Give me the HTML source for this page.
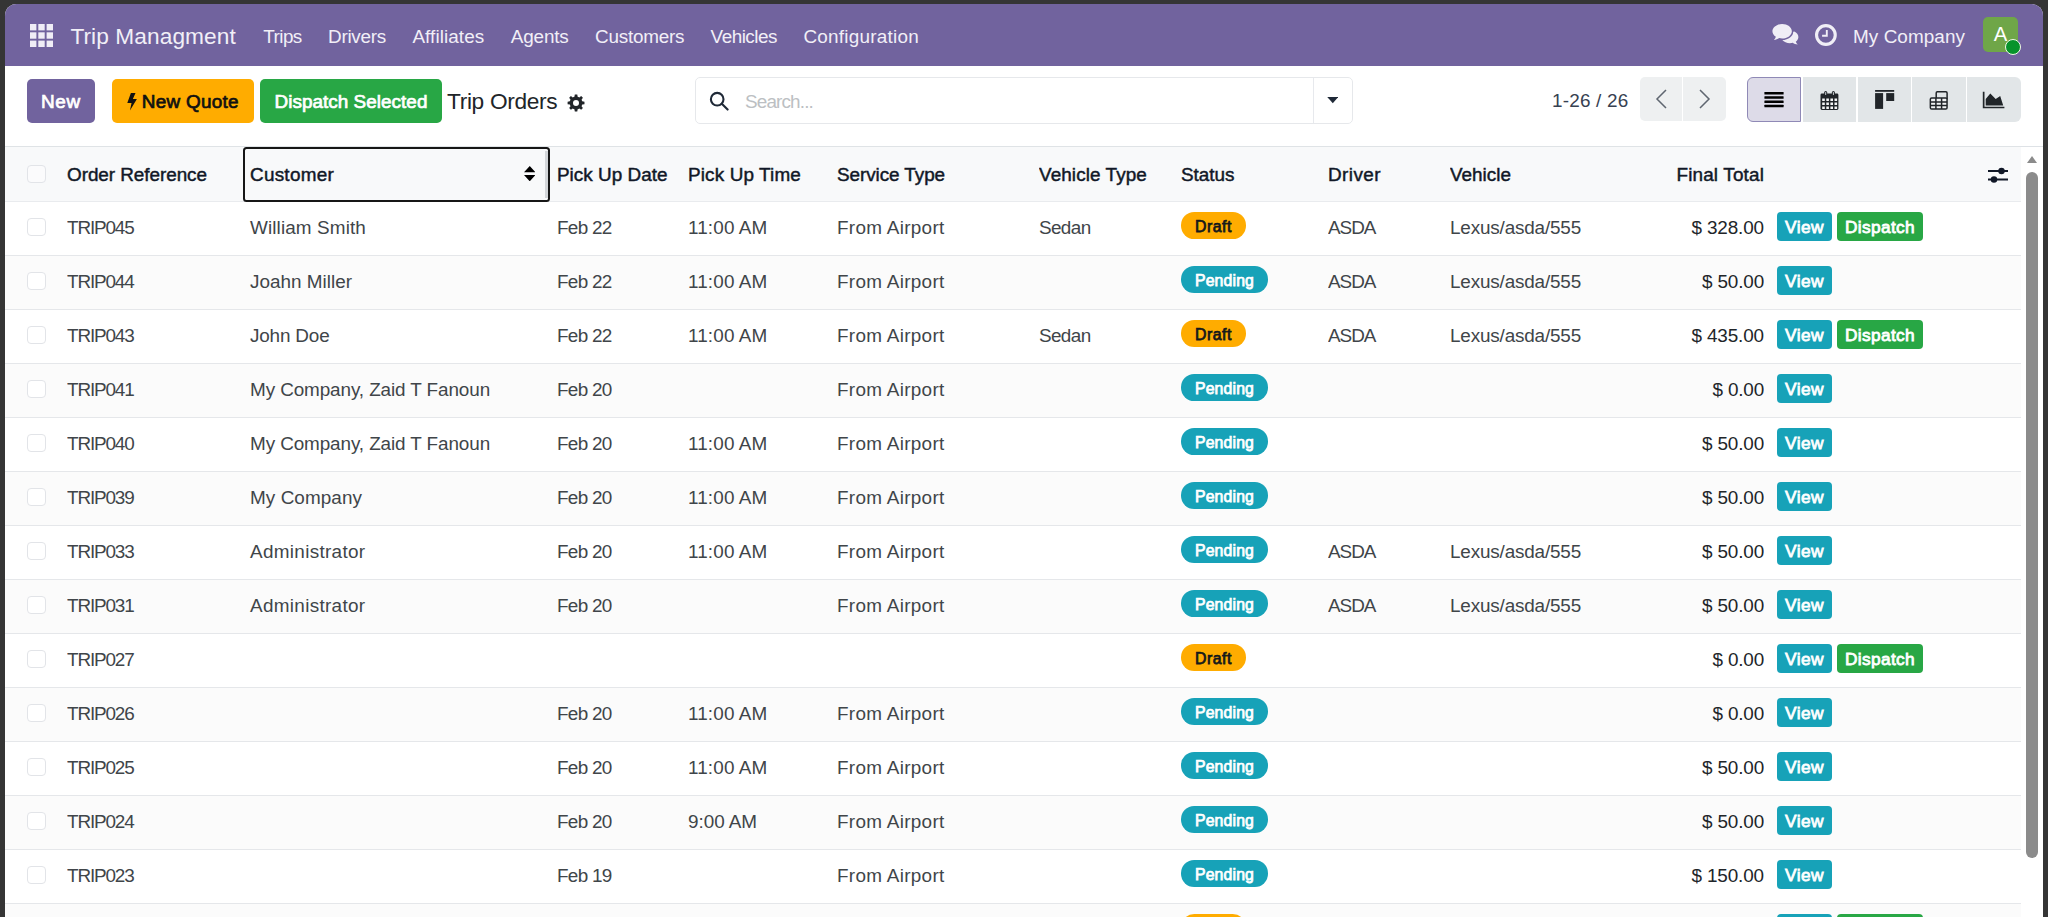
<!DOCTYPE html>
<html lang="en">
<head>
<meta charset="utf-8">
<title>Trip Orders</title>
<style>
*{box-sizing:border-box}
html,body{margin:0;padding:0}
body{width:2048px;height:917px;overflow:hidden;background:#353535;font-family:"Liberation Sans",sans-serif;font-size:18.9px;color:#404549;position:relative}
.app{position:absolute;left:5px;top:3.5px;width:2038px;height:920px;background:#fff;border-radius:11.5px 11.5px 0 0;overflow:hidden}
/* navbar */
.nav{position:absolute;left:0;top:0;width:100%;height:62px;background:#71639e;color:#f1eff7}
.nav span.t{position:absolute;white-space:nowrap;line-height:1}
.brand{font-size:22.7px}
.nav svg{position:absolute}
.avatar{position:absolute;left:1978px;top:13.5px;width:35px;height:35px;border-radius:5px;background:#6fa648;color:#fff;font-size:20.3px;text-align:center;line-height:35px}
.avatar i{position:absolute;right:-3px;bottom:-3px;width:16px;height:16px;border-radius:50%;background:#07932b;border:1.5px solid #f4fbe9}
/* control panel */
.cp{position:absolute;left:0;top:62px;width:100%;height:81px}
.btn{position:absolute;top:13.5px;height:43.5px;border-radius:5px;color:#fff;font-weight:normal;-webkit-text-stroke:.7px currentColor;font-size:18.9px;line-height:45.6px;text-align:center;white-space:nowrap}
.b-new{left:22px;width:68px;background:#71639e}
.b-quote{left:107px;width:142px;background:#ffac00;color:#111}
.b-disp{left:255px;width:182px;background:#28a745}
.title{position:absolute;left:442px;top:24px;font-size:22.7px;line-height:1;color:#212529;white-space:nowrap}
.search{position:absolute;left:690px;top:11.5px;width:658px;height:47px;border:1px solid #e6e8eb;border-radius:5px}
.search .ph{position:absolute;left:49px;top:14.5px;color:#bcbfc3;line-height:1;font-size:18.9px}
.search .div{position:absolute;left:617px;top:0;width:1px;height:45px;background:#e7e9ed}
.pager{position:absolute;left:1547px;top:26px;line-height:1;color:#374151;white-space:nowrap}
.pbtn{position:absolute;top:11.5px;height:44px;background:#eef0f1}
.vs{position:absolute;top:11.5px;height:45px;background:#e2e6e8}
/* list */
.list{position:absolute;left:0;top:142px;width:2016px}
.hline{position:absolute;left:0;top:142px;width:100%;height:1px;background:#dee2e6}
table{border-collapse:collapse;table-layout:fixed;width:2016px}
th,td{padding:0;height:54px;text-align:left;white-space:nowrap;overflow:hidden;vertical-align:middle;font-weight:normal}
tbody td{padding-bottom:0}
thead tr{background:#f8f9fa;border-top:1px solid #dfe3e6;border-bottom:1px solid #e9ebee}
thead th{color:#111827;-webkit-text-stroke:.45px #111827;height:55px;padding-top:2.4px}
thead th.custh{padding:0;overflow:visible;position:relative}
.focus{position:absolute;left:0;top:.5px;height:54.5px;width:307px;border:2px solid #161616;border-radius:3.5px;line-height:52.6px;background:#f8f9fa}
.focus .sort{position:absolute;left:278.7px;top:16.8px}
.focus i{position:absolute;right:0;top:1.5px;bottom:1.5px;width:3.5px;background:#d3d6d9}
tbody tr{border-bottom:1px solid #e5e7ea}
tbody tr:nth-child(even){background:#fbfbfb}
.cb{display:block;width:18.5px;height:18.5px;border:1px solid #e2e4e8;border-radius:4px;margin-left:22.3px;background:#fff;position:relative;top:-1.1px}
td.num{text-align:right;color:#212529}
.badge{display:inline-block;height:26.4px;line-height:29.2px;border-radius:13.2px;padding:0 14px;font-size:15.8px;font-weight:normal;-webkit-text-stroke:.75px currentColor;position:relative;top:-2.5px}
.draft{background:#ffac00;color:#15181b}
.pend{background:#17a2b8;color:#fff}
.rb{display:inline-block;height:28.5px;line-height:31.3px;border-radius:4px;color:#fff;font-weight:normal;-webkit-text-stroke:.8px #fff;font-size:17.3px;text-align:center;vertical-align:middle;position:relative;top:-1.5px}
.rb.v{background:#17a2b8;width:55px;margin-left:13px}
.rb.d{background:#28a745;width:86px;margin-left:5px}
.sb{position:absolute;left:2021.2px;top:168px;width:11.8px;height:686px;border-radius:6px;background:#8b8b8b}
.sba{position:absolute;left:2022px;top:152.5px;width:0;height:0;border-left:5.3px solid transparent;border-right:5.3px solid transparent;border-bottom:7.5px solid #8b8b8b}
</style>
</head>
<body>
<div class="app">
<div class="nav">
<svg style="left:25px;top:20.1px" width="23" height="23" viewBox="0 0 22.7 22.7" fill="#f0eef6"><rect x="0" y="0" width="6.3" height="6.3"/><rect x="8.2" y="0" width="6.3" height="6.3"/><rect x="16.4" y="0" width="6.3" height="6.3"/><rect x="0" y="8.2" width="6.3" height="6.3"/><rect x="8.2" y="8.2" width="6.3" height="6.3"/><rect x="16.4" y="8.2" width="6.3" height="6.3"/><rect x="0" y="16.4" width="6.3" height="6.3"/><rect x="8.2" y="16.4" width="6.3" height="6.3"/><rect x="16.4" y="16.4" width="6.3" height="6.3"/></svg>
<span class="t brand" style="letter-spacing:0.08px;left:65.4px;top:21.48px;font-size:22.7px">Trip Managment</span>
<span class="t " style="letter-spacing:-0.54px;left:258.2px;top:24.10px;font-size:18.9px">Trips</span>
<span class="t " style="letter-spacing:-0.26px;left:323px;top:24.10px;font-size:18.9px">Drivers</span>
<span class="t " style="letter-spacing:0.09px;left:407.4px;top:24.10px;font-size:18.9px">Affiliates</span>
<span class="t " style="letter-spacing:-0.14px;left:505.7px;top:24.10px;font-size:18.9px">Agents</span>
<span class="t " style="letter-spacing:-0.25px;left:590.1px;top:24.10px;font-size:18.9px">Customers</span>
<span class="t " style="letter-spacing:-0.50px;left:705.6px;top:24.10px;font-size:18.9px">Vehicles</span>
<span class="t " style="letter-spacing:0.24px;left:798.4px;top:24.10px;font-size:18.9px">Configuration</span>
<svg style="left:1766.6px;top:19.9px" width="27" height="23.1" viewBox="0 0 28 24" fill="#f0eef6">
<path d="M10.5 1C4.9 1 .4 4.4 .4 8.6c0 2.3 1.4 4.4 3.6 5.8-.4 1.2-1.1 2.3-2.1 3.2 2.1-.1 4-.8 5.5-1.9 1 .3 2 .4 3.1.4 5.600 0 10.100-3.400 10.100-7.600S16.100 1 10.500 1z"/>
<path d="M22.6 9.600c0 4.700-5 8.500-11.300 8.700 1.700 2 4.600 3.300 7.900 3.300 1 0 2-.1 2.900-.4 1.400 1 3.200 1.700 5.200 1.800-.9-.9-1.600-1.900-2-3 1.700-1.200 2.700-2.900 2.700-4.800 0-2.400-1.700-4.500-4.300-5.700z" transform="translate(-.6,-.6)"/></svg>
<svg style="left:1808.5px;top:19.0px" width="24" height="24" viewBox="0 0 24 24" fill="none" stroke="#f0eef6">
<circle cx="11.9" cy="12" r="9.35" stroke-width="3.1"/><path d="M12.8 7.1v5.600H8.100" stroke-width="1.9"/></svg>
<span class="t " style="letter-spacing:0.07px;left:1848px;top:24.10px;font-size:18.9px">My Company</span>
<div class="avatar" style="left:1978px;top:13.5px">A<i></i></div>
</div>
<div class="cp">
<div class="btn b-new"><span style="letter-spacing:0.73px">New</span></div>
<div class="btn b-quote"><svg width="10.2" height="17.6" viewBox="0 0 11 19" style="vertical-align:-2.8px;margin-right:5px;margin-left:-.5px" fill="#111"><path d="M4.2 0h5L6.300 6.400h4.400L3.200 19l1.700-8.300H.3z"/></svg><span style="letter-spacing:0.28px">New Quote</span></div>
<div class="btn b-disp"><span style="letter-spacing:0.04px">Dispatch Selected</span></div>
<div class="title"><span style="letter-spacing:-0.33px">Trip Orders</span></div>
<svg class="gear" style="position:absolute;left:562px;top:28.5px" width="18" height="18" viewBox="0 0 24 24"><path fill="#212529" d="M24 13.600v-3.300l-3-.5c-.2-.800-.5-1.500-.9-2.200l1.800-2.500-2.300-2.300-2.500 1.800c-.7-.4-1.400-.7-2.200-.9L14.400.7h-3.300l-.5 3c-.8.2-1.500.5-2.200.9L5.900 2.800 3.600 5.100l1.800 2.500c-.4.700-.7 1.400-.9 2.200l-3 .5v3.300l3 .5c.2.800.5 1.500.9 2.200l-1.800 2.500 2.300 2.300 2.500-1.800c.7.4 1.400.7 2.200.9l.5 3h3.300l.5-3c.8-.2 1.500-.5 2.200-.9l2.500 1.800 2.300-2.300-1.800-2.500c.4-.7.7-1.400.9-2.200zM12.700 16a4 4 0 1 1 0-8 4 4 0 0 1 0 8z" transform="translate(-.7,0)"/></svg>
<div class="search"><svg style="position:absolute;left:13px;top:13px" width="20" height="20" viewBox="0 0 20 20" fill="none" stroke="#1f2937" stroke-width="2.1"><circle cx="8.2" cy="8.2" r="6.3"/><path d="M12.800 12.800l5.800 5.800" stroke-linecap="round"/></svg><span class="ph"><span style="letter-spacing:-0.85px">Search...</span></span><div class="div"></div>
<svg style="position:absolute;left:630.5px;top:19.3px" width="11.6" height="6.8" viewBox="0 0 13 8"><path d="M0 0h13L6.500 7.500z" fill="#1f2937"/></svg></div>
<div class="pager"><span style="letter-spacing:0.20px">1-26 / 26</span></div>
<div class="pbtn" style="left:1634.700px;width:42.500px;border-radius:5px 0 0 5px"><svg style="position:absolute;left:14px;top:11px" width="14" height="22" viewBox="0 0 14 22" fill="none" stroke="#5f6670" stroke-width="1.5"><path d="M12 2L3 11 12 20"/></svg></div>
<div class="pbtn" style="left:1678px;width:43px;border-radius:0 5px 5px 0"><svg style="position:absolute;left:15px;top:11px" width="14" height="22" viewBox="0 0 14 22" fill="none" stroke="#5f6670" stroke-width="1.5"><path d="M2 2L11 11 2 20"/></svg></div>
<div class="vs" style="left:1742.4px;width:53.799999999999955px;background:#dddbe8;border:1px solid #8f89b6;border-radius:6px 0 0 6px;"><svg width="53.799999999999955" height="45" style="position:absolute;left:-1px;top:-1px"><g transform="translate(-1747.40,-77)"><rect x="1764.8" y="91.9" width="19.2" height="2.5" rx=".5" fill="#000"/><rect x="1764.8" y="96.2" width="19.2" height="2.5" rx=".5" fill="#000"/><rect x="1764.8" y="100.4" width="19.2" height="2.5" rx=".5" fill="#000"/><rect x="1764.8" y="104.7" width="19.2" height="2.5" rx=".5" fill="#000"/></g></svg></div>
<div class="vs" style="left:1797.7px;width:53.5px;"><svg width="53.5" height="45" style="position:absolute;left:0px;top:0px"><g transform="translate(-1802.70,-77)"><rect x="1820.2" y="93.6" width="17.9" height="16.3" rx="1.4" fill="#212529"/><rect x="1821.90" y="98.50" width="2.6" height="2.5" fill="#f4f5f6"/><rect x="1826.00" y="98.50" width="2.6" height="2.5" fill="#f4f5f6"/><rect x="1830.10" y="98.50" width="2.6" height="2.5" fill="#f4f5f6"/><rect x="1834.20" y="98.50" width="2.6" height="2.5" fill="#f4f5f6"/><rect x="1821.90" y="102.50" width="2.6" height="2.5" fill="#f4f5f6"/><rect x="1826.00" y="102.50" width="2.6" height="2.5" fill="#f4f5f6"/><rect x="1830.10" y="102.50" width="2.6" height="2.5" fill="#f4f5f6"/><rect x="1834.20" y="102.50" width="2.6" height="2.5" fill="#f4f5f6"/><rect x="1821.90" y="106.50" width="2.6" height="2.5" fill="#f4f5f6"/><rect x="1826.00" y="106.50" width="2.6" height="2.5" fill="#f4f5f6"/><rect x="1830.10" y="106.50" width="2.6" height="2.5" fill="#f4f5f6"/><rect x="1834.20" y="106.50" width="2.6" height="2.5" fill="#f4f5f6"/><rect x="1823.90" y="91.1" width="3" height="5.2" rx="1.5" fill="#212529"/><rect x="1824.90" y="92.1" width="1" height="3" rx=".5" fill="#cfd4d8"/><rect x="1831.60" y="91.1" width="3" height="5.2" rx="1.5" fill="#212529"/><rect x="1832.60" y="92.1" width="1" height="3" rx=".5" fill="#cfd4d8"/></g></svg></div>
<div class="vs" style="left:1852.7px;width:53.200000000000045px;"><svg width="53.200000000000045" height="45" style="position:absolute;left:0px;top:0px"><g transform="translate(-1857.70,-77)"><g fill="#212529"><rect x="1874.8" y="90" width="19.1" height="1.8"/><rect x="1874.8" y="93.1" width="8" height="15.8"/><rect x="1885.9" y="93.1" width="8" height="7.9"/></g></g></svg></div>
<div class="vs" style="left:1907.4px;width:53.5px;"><svg width="53.5" height="45" style="position:absolute;left:0px;top:0px"><g transform="translate(-1912.40,-77)"><g fill="none" stroke="#212529" stroke-width="1.5"><rect x="1936.6" y="91.75" width="10.9" height="8" rx="1.2"/><rect x="1930.75" y="98.0" width="16.7" height="11" rx="1.3" fill="#f1f3f4"/><path d="M1930.75 101.9h16.7M1930.75 105.6h16.7M1936.3 98.0v11M1942.0 98.0v11"/></g></g></svg></div>
<div class="vs" style="left:1962.4px;width:53.59999999999991px;border-radius:0 6px 6px 0;"><svg width="53.59999999999991" height="45" style="position:absolute;left:0px;top:0px"><g transform="translate(-1967.40,-77)"><g fill="#212529"><path d="M1983.2 91.8h1.7v15h19.9v1.500h-21.600z"/><path d="M1986.1 105.4v-6.400l4.600-5.600 5.400 5.500 4.500-3 3 9.500z"/></g></g></svg></div>
</div>
<div class="hline"></div>
<div class="list">
<table><colgroup><col style="width:62px"><col style="width:176px"><col style="width:306.5px"><col style="width:138.5px"><col style="width:149px"><col style="width:202px"><col style="width:142px"><col style="width:147px"><col style="width:122px"><col style="width:190px"><col style="width:124px"><col style="width:257px"></colgroup><thead><tr><th><span class="cb" style="background:#fbfbfc;top:-.6px"></span></th><th><span style="letter-spacing:-0.05px">Order Reference</span></th><th class="custh"><div class="focus"><span style="letter-spacing:0.26px;margin-left:5px">Customer</span><svg class="sort" width="11.5" height="15.3" viewBox="0 0 12 16" fill="#000"><path d="M6 0l6 6.600H0zM6 16l6-6.600H0z"/></svg><i></i></div></th><th style="padding-left:7.500px"><span style="letter-spacing:0.02px">Pick Up Date</span></th><th><span style="letter-spacing:0.14px">Pick Up Time</span></th><th><span style="letter-spacing:-0.07px">Service Type</span></th><th><span style="letter-spacing:0.10px">Vehicle Type</span></th><th><span style="letter-spacing:-0.01px">Status</span></th><th><span style="letter-spacing:0.44px">Driver</span></th><th><span style="letter-spacing:0.01px">Vehicle</span></th><th style="text-align:right"><span style="letter-spacing:0.16px">Final Total</span></th><th><svg style="margin-left:224px;display:block" width="20" height="16" viewBox="0 0 20 16"><g stroke="#111827" stroke-width="1.900" fill="#111827"><path d="M0 4h20M0 12.500h20"/><circle cx="13.500" cy="4" r="2.300"/><circle cx="6" cy="12.500" r="2.300"/></g></svg></th></tr></thead><tbody>
<tr><td><span class="cb"></span></td><td><span style="letter-spacing:-1.14px">TRIP045</span></td><td style="padding-left:7px"><span style="letter-spacing:0.12px">William Smith</span></td><td style="padding-left:7.500px"><span style="letter-spacing:-0.70px">Feb 22</span></td><td><span style="letter-spacing:0.13px">11:00 AM</span></td><td><span style="letter-spacing:0.30px">From Airport</span></td><td><span style="letter-spacing:-0.62px">Sedan</span></td><td><span class="badge draft"><span style="letter-spacing:0.55px">Draft</span></span></td><td><span style="letter-spacing:-0.99px">ASDA</span></td><td><span style="letter-spacing:-0.17px">Lexus/asda/555</span></td><td class="num"><span style="letter-spacing:-0.13px">$ 328.00</span></td><td><span class="rb v"><span style="letter-spacing:0.46px">View</span></span><span class="rb d"><span style="letter-spacing:0.34px">Dispatch</span></span></td></tr>
<tr><td><span class="cb"></span></td><td><span style="letter-spacing:-1.14px">TRIP044</span></td><td style="padding-left:7px"><span style="letter-spacing:0.01px">Joahn Miller</span></td><td style="padding-left:7.500px"><span style="letter-spacing:-0.70px">Feb 22</span></td><td><span style="letter-spacing:0.13px">11:00 AM</span></td><td><span style="letter-spacing:0.30px">From Airport</span></td><td></td><td><span class="badge pend"><span style="letter-spacing:0.15px">Pending</span></span></td><td><span style="letter-spacing:-0.99px">ASDA</span></td><td><span style="letter-spacing:-0.17px">Lexus/asda/555</span></td><td class="num"><span style="letter-spacing:-0.15px">$ 50.00</span></td><td><span class="rb v"><span style="letter-spacing:0.46px">View</span></span></td></tr>
<tr><td><span class="cb"></span></td><td><span style="letter-spacing:-1.14px">TRIP043</span></td><td style="padding-left:7px"><span style="letter-spacing:-0.17px">John Doe</span></td><td style="padding-left:7.500px"><span style="letter-spacing:-0.70px">Feb 22</span></td><td><span style="letter-spacing:0.13px">11:00 AM</span></td><td><span style="letter-spacing:0.30px">From Airport</span></td><td><span style="letter-spacing:-0.62px">Sedan</span></td><td><span class="badge draft"><span style="letter-spacing:0.55px">Draft</span></span></td><td><span style="letter-spacing:-0.99px">ASDA</span></td><td><span style="letter-spacing:-0.17px">Lexus/asda/555</span></td><td class="num"><span style="letter-spacing:-0.13px">$ 435.00</span></td><td><span class="rb v"><span style="letter-spacing:0.46px">View</span></span><span class="rb d"><span style="letter-spacing:0.34px">Dispatch</span></span></td></tr>
<tr><td><span class="cb"></span></td><td><span style="letter-spacing:-1.14px">TRIP041</span></td><td style="padding-left:7px"><span style="letter-spacing:-0.10px">My Company, Zaid T Fanoun</span></td><td style="padding-left:7.500px"><span style="letter-spacing:-0.70px">Feb 20</span></td><td></td><td><span style="letter-spacing:0.30px">From Airport</span></td><td></td><td><span class="badge pend"><span style="letter-spacing:0.15px">Pending</span></span></td><td></td><td></td><td class="num"><span style="letter-spacing:-0.17px">$ 0.00</span></td><td><span class="rb v"><span style="letter-spacing:0.46px">View</span></span></td></tr>
<tr><td><span class="cb"></span></td><td><span style="letter-spacing:-1.14px">TRIP040</span></td><td style="padding-left:7px"><span style="letter-spacing:-0.10px">My Company, Zaid T Fanoun</span></td><td style="padding-left:7.500px"><span style="letter-spacing:-0.70px">Feb 20</span></td><td><span style="letter-spacing:0.13px">11:00 AM</span></td><td><span style="letter-spacing:0.30px">From Airport</span></td><td></td><td><span class="badge pend"><span style="letter-spacing:0.15px">Pending</span></span></td><td></td><td></td><td class="num"><span style="letter-spacing:-0.15px">$ 50.00</span></td><td><span class="rb v"><span style="letter-spacing:0.46px">View</span></span></td></tr>
<tr><td><span class="cb"></span></td><td><span style="letter-spacing:-1.14px">TRIP039</span></td><td style="padding-left:7px"><span style="letter-spacing:0.07px">My Company</span></td><td style="padding-left:7.500px"><span style="letter-spacing:-0.70px">Feb 20</span></td><td><span style="letter-spacing:0.13px">11:00 AM</span></td><td><span style="letter-spacing:0.30px">From Airport</span></td><td></td><td><span class="badge pend"><span style="letter-spacing:0.15px">Pending</span></span></td><td></td><td></td><td class="num"><span style="letter-spacing:-0.15px">$ 50.00</span></td><td><span class="rb v"><span style="letter-spacing:0.46px">View</span></span></td></tr>
<tr><td><span class="cb"></span></td><td><span style="letter-spacing:-1.14px">TRIP033</span></td><td style="padding-left:7px"><span style="letter-spacing:0.32px">Administrator</span></td><td style="padding-left:7.500px"><span style="letter-spacing:-0.70px">Feb 20</span></td><td><span style="letter-spacing:0.13px">11:00 AM</span></td><td><span style="letter-spacing:0.30px">From Airport</span></td><td></td><td><span class="badge pend"><span style="letter-spacing:0.15px">Pending</span></span></td><td><span style="letter-spacing:-0.99px">ASDA</span></td><td><span style="letter-spacing:-0.17px">Lexus/asda/555</span></td><td class="num"><span style="letter-spacing:-0.15px">$ 50.00</span></td><td><span class="rb v"><span style="letter-spacing:0.46px">View</span></span></td></tr>
<tr><td><span class="cb"></span></td><td><span style="letter-spacing:-1.14px">TRIP031</span></td><td style="padding-left:7px"><span style="letter-spacing:0.32px">Administrator</span></td><td style="padding-left:7.500px"><span style="letter-spacing:-0.70px">Feb 20</span></td><td></td><td><span style="letter-spacing:0.30px">From Airport</span></td><td></td><td><span class="badge pend"><span style="letter-spacing:0.15px">Pending</span></span></td><td><span style="letter-spacing:-0.99px">ASDA</span></td><td><span style="letter-spacing:-0.17px">Lexus/asda/555</span></td><td class="num"><span style="letter-spacing:-0.15px">$ 50.00</span></td><td><span class="rb v"><span style="letter-spacing:0.46px">View</span></span></td></tr>
<tr><td><span class="cb"></span></td><td><span style="letter-spacing:-1.14px">TRIP027</span></td><td style="padding-left:7px"></td><td style="padding-left:7.500px"></td><td></td><td></td><td></td><td><span class="badge draft"><span style="letter-spacing:0.55px">Draft</span></span></td><td></td><td></td><td class="num"><span style="letter-spacing:-0.17px">$ 0.00</span></td><td><span class="rb v"><span style="letter-spacing:0.46px">View</span></span><span class="rb d"><span style="letter-spacing:0.34px">Dispatch</span></span></td></tr>
<tr><td><span class="cb"></span></td><td><span style="letter-spacing:-1.14px">TRIP026</span></td><td style="padding-left:7px"></td><td style="padding-left:7.500px"><span style="letter-spacing:-0.70px">Feb 20</span></td><td><span style="letter-spacing:0.13px">11:00 AM</span></td><td><span style="letter-spacing:0.30px">From Airport</span></td><td></td><td><span class="badge pend"><span style="letter-spacing:0.15px">Pending</span></span></td><td></td><td></td><td class="num"><span style="letter-spacing:-0.17px">$ 0.00</span></td><td><span class="rb v"><span style="letter-spacing:0.46px">View</span></span></td></tr>
<tr><td><span class="cb"></span></td><td><span style="letter-spacing:-1.14px">TRIP025</span></td><td style="padding-left:7px"></td><td style="padding-left:7.500px"><span style="letter-spacing:-0.70px">Feb 20</span></td><td><span style="letter-spacing:0.13px">11:00 AM</span></td><td><span style="letter-spacing:0.30px">From Airport</span></td><td></td><td><span class="badge pend"><span style="letter-spacing:0.15px">Pending</span></span></td><td></td><td></td><td class="num"><span style="letter-spacing:-0.15px">$ 50.00</span></td><td><span class="rb v"><span style="letter-spacing:0.46px">View</span></span></td></tr>
<tr><td><span class="cb"></span></td><td><span style="letter-spacing:-1.14px">TRIP024</span></td><td style="padding-left:7px"></td><td style="padding-left:7.500px"><span style="letter-spacing:-0.70px">Feb 20</span></td><td><span style="letter-spacing:-0.04px">9:00 AM</span></td><td><span style="letter-spacing:0.30px">From Airport</span></td><td></td><td><span class="badge pend"><span style="letter-spacing:0.15px">Pending</span></span></td><td></td><td></td><td class="num"><span style="letter-spacing:-0.15px">$ 50.00</span></td><td><span class="rb v"><span style="letter-spacing:0.46px">View</span></span></td></tr>
<tr><td><span class="cb"></span></td><td><span style="letter-spacing:-1.14px">TRIP023</span></td><td style="padding-left:7px"></td><td style="padding-left:7.500px"><span style="letter-spacing:-0.70px">Feb 19</span></td><td></td><td><span style="letter-spacing:0.30px">From Airport</span></td><td></td><td><span class="badge pend"><span style="letter-spacing:0.15px">Pending</span></span></td><td></td><td></td><td class="num"><span style="letter-spacing:-0.13px">$ 150.00</span></td><td><span class="rb v"><span style="letter-spacing:0.46px">View</span></span></td></tr>
<tr><td><span class="cb"></span></td><td><span style="letter-spacing:-1.14px">TRIP022</span></td><td style="padding-left:7px"></td><td style="padding-left:7.500px"><span style="letter-spacing:-0.70px">Feb 19</span></td><td></td><td><span style="letter-spacing:0.30px">From Airport</span></td><td></td><td><span class="badge draft"><span style="letter-spacing:0.55px">Draft</span></span></td><td></td><td></td><td class="num"><span style="letter-spacing:-0.17px">$ 0.00</span></td><td><span class="rb v"><span style="letter-spacing:0.46px">View</span></span><span class="rb d"><span style="letter-spacing:0.34px">Dispatch</span></span></td></tr>
</tbody></table>
</div>
<div class="sba"></div><div class="sb"></div>
</div>
</body>
</html>
